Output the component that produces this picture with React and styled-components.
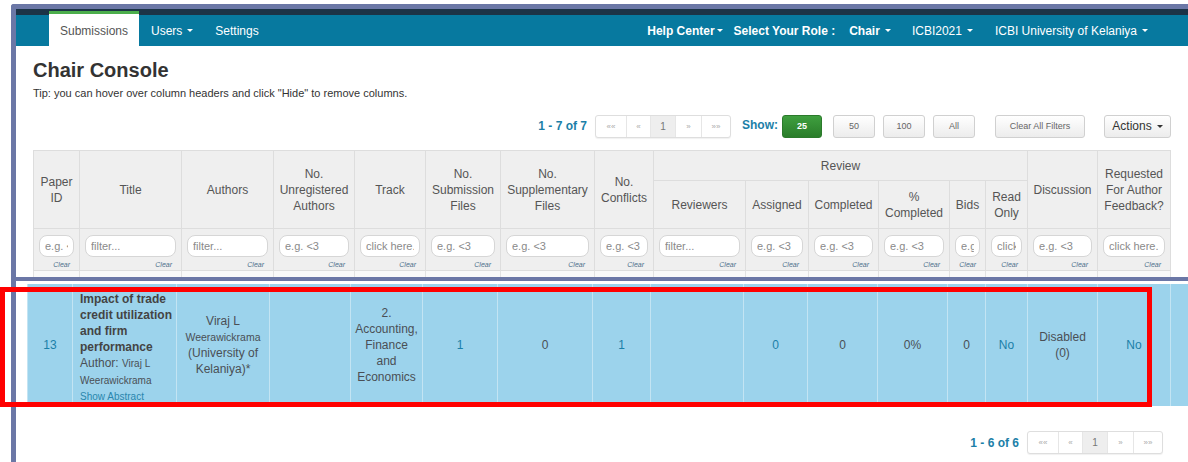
import React from 'react';
import styled, { createGlobalStyle } from 'styled-components';

const SLATE = '#6b77a6';
const TEAL = '#1b7fa8';

const GlobalStyle = createGlobalStyle`
  html, body { margin: 0; padding: 0; background: #fff; }
  body { font-family: "Liberation Sans", Arial, sans-serif; overflow: hidden; }
  #root { width: 1188px; height: 462px; overflow: hidden; }
  * { box-sizing: border-box; }
`;

const Page = styled.div`
  position: relative;
  width: 1188px;
  height: 462px;
  padding-top: 4px;
  overflow: hidden;
  background: #fff;
`;

const Frame = styled.div`
  margin-left: 11px;
  height: 458px;
  border-left: 5px solid ${SLATE};
  border-top: 5px solid ${SLATE};
  border-top-left-radius: 3px;
  overflow: hidden;
  display: flex;
  flex-direction: column;
`;

/* ---------- top navigation ---------- */
const TopBar = styled.nav`
  display: flex;
  flex: none;
  height: 37px;
  border-top: 6px solid #1c3346;
  background: #07799f;
  padding: 0 40px 0 33px;
  font-size: 12px;
`;

const ActiveTab = styled.a`
  margin-top: -4px;
  width: 90px;
  display: flex;
  align-items: center;
  justify-content: center;
  background: #fff;
  border-top: 3px solid #4cae4c;
  color: #555;
  padding-top: 1px;
`;

const NavLink = styled.a`
  display: flex;
  align-items: center;
  color: #fff;
  margin-left: ${p => p.$ml || 0}px;
  font-weight: ${p => (p.$bold ? 700 : 400)};
  white-space: nowrap;
`;

const RightNav = styled.div`
  display: flex;
  margin-left: auto;
`;

const Caret = styled.span`
  display: inline-block;
  width: 0;
  height: 0;
  margin-left: ${p => (p.$tight ? 2 : 5)}px;
  border-top: 3px solid currentColor;
  border-left: 3px solid transparent;
  border-right: 3px solid transparent;
`;

/* ---------- console heading ---------- */
const Content = styled.section`
  flex: none;
  padding: 0 17px;
  overflow: hidden;
`;

const Heading = styled.h1`
  margin: 12px 0 0;
  font-size: 20px;
  line-height: 24px;
  font-weight: 700;
  color: #333;
`;

const Tip = styled.p`
  margin: 4px 0 0;
  font-size: 11px;
  line-height: 14px;
  color: #333;
`;

/* ---------- toolbar ---------- */
const Toolbar = styled.div`
  display: flex;
  justify-content: flex-end;
  align-items: center;
  height: 24px;
  margin-top: 14px;
`;

const Count = styled.span`
  font-size: 12px;
  font-weight: 700;
  color: ${TEAL};
  margin-left: ${p => p.$ml || 0}px;
  white-space: nowrap;
`;

const PagerBox = styled.div`
  display: flex;
  height: 23px;
  margin-left: ${p => p.$ml || 0}px;
  border: 1px solid #dedede;
  border-radius: 3px;
  background: #fff;
  box-shadow: 0 1px 1px rgba(0, 0, 0, 0.06);
  overflow: hidden;
`;

const PagerCell = styled.span`
  width: ${p => p.$w}px;
  display: flex;
  align-items: center;
  justify-content: center;
  font-size: ${p => (p.$active ? 10 : 8)}px;
  color: ${p => (p.$active ? '#777' : '#aaa')};
  background: ${p => (p.$active ? '#eee' : 'transparent')};
  border-left: 1px solid #e6e6e6;
  &:first-child { border-left: 0; }
`;

const ShowLabel = styled.span`
  font-size: 12px;
  font-weight: 700;
  color: ${TEAL};
  margin-left: 11px;
  margin-bottom: 3px;
`;

const SmallButton = styled.button`
  width: ${p => p.$w}px;
  height: 23px;
  margin-left: ${p => p.$ml || 0}px;
  padding: 0;
  font-family: inherit;
  font-size: ${p => p.$fs || 9}px;
  font-weight: ${p => (p.$active ? 700 : 400)};
  color: ${p => (p.$active ? '#fff' : '#666')};
  border: 1px solid ${p => (p.$active ? '#2b7a2b' : '#d0d0d0')};
  border-radius: 3px;
  background: ${p =>
    p.$active
      ? 'linear-gradient(#3f9f3f, #2a7d2a)'
      : 'linear-gradient(#ffffff, #ececec)'};
  display: flex;
  align-items: center;
  justify-content: center;
  gap: 5px;
`;

const ActionsLabel = styled.span`
  display: flex;
  align-items: center;
  gap: 5px;
  color: #333;
`;

/* ---------- table ---------- */
const TableClip = styled.div`
  margin-top: 12px;
  height: 127px;
  overflow: hidden;
`;

const Grid = styled.table`
  table-layout: fixed;
  border-collapse: collapse;
  width: ${p => p.$w}px;
  font-size: 12px;
`;

const HeadCell = styled.th`
  background: #efefef;
  border: 1px solid #dddddd;
  color: #555;
  font-weight: 400;
  line-height: 16px;
  text-align: center;
  vertical-align: middle;
  padding: 0 2px;
  white-space: nowrap;
  overflow: hidden;
`;

const FilterCell = styled.td`
  background: #efefef;
  border: 1px solid #dddddd;
  padding: 6px 5px 0;
  vertical-align: top;
`;

const FilterInput = styled.input`
  display: block;
  width: 100%;
  height: 22px;
  border: 1px solid #d6d6d6;
  border-radius: 8px;
  background: #fff;
  padding: 0 5px;
  font-family: inherit;
  font-size: 11px;
  color: #555;
  outline: none;
  &::placeholder { color: #8a8a8a; }
`;

const ClearLink = styled.div`
  text-align: right;
  font-size: 7px;
  line-height: 9px;
  margin-top: 3px;
  padding-right: 4px;
  font-style: italic;
  color: #4e6f8c;
`;

const BlankCell = styled.td`
  height: 20px;
  background: #f9f9f9;
  border: 1px solid #e2e2e2;
`;

const Divider = styled.div`
  flex: none;
  height: 4px;
  background: ${SLATE};
`;

/* ---------- highlighted submission row ---------- */
const LowerSection = styled.section`
  flex: 1;
  padding: 3px 0 0 11px;
  overflow: hidden;
`;

const RowCell = styled.td`
  height: 122px;
  background: #9cd3ec;
  border-left: 1px solid #c3e4f3;
  border-right: 1px solid #c3e4f3;
  vertical-align: middle;
  text-align: ${p => p.$align || 'center'};
  padding: ${p => (p.$align === 'left' ? '5px 4px 0 7px' : '0 3px')};
  font-size: 12px;
  line-height: 16px;
  color: ${p => (p.$link ? TEAL : '#4a4f55')};
  overflow: hidden;
`;

const TitleText = styled.div`
  font-weight: 700;
  color: #444;
`;

const AuthorLine = styled.div`
  line-height: 16px;
`;

const SmallText = styled.span`
  font-size: ${p => p.$size || 10}px;
`;

const AbstractLink = styled.div`
  font-size: 10px;
  color: #2a86ad;
`;

const BottomBar = styled.div`
  display: flex;
  justify-content: flex-end;
  align-items: center;
  margin-top: 26px;
  padding-right: 25px;
  height: 21px;
`;

const Annotation = styled.div`
  position: absolute;
  left: 0;
  top: 287px;
  width: 1152px;
  height: 120px;
  border: 5px solid #ff0000;
  pointer-events: none;
`;

const columns = [
  { label: ['Paper', 'ID'], w: 46, filter: 'e.g. <3' },
  { label: ['Title'], w: 102, filter: 'filter...' },
  { label: ['Authors'], w: 92, filter: 'filter...' },
  { label: ['No.', 'Unregistered', 'Authors'], w: 81, filter: 'e.g. <3' },
  { label: ['Track'], w: 71, filter: 'click here.' },
  { label: ['No.', 'Submission', 'Files'], w: 75, filter: 'e.g. <3' },
  { label: ['No.', 'Supplementary', 'Files'], w: 94, filter: 'e.g. <3' },
  { label: ['No.', 'Conflicts'], w: 59, filter: 'e.g. <3' },
  { label: ['Reviewers'], w: 92, filter: 'filter...', group: true },
  { label: ['Assigned'], w: 63, filter: 'e.g. <3', group: true },
  { label: ['Completed'], w: 70, filter: 'e.g. <3', group: true },
  { label: ['%', 'Completed'], w: 71, filter: 'e.g. <3', group: true },
  { label: ['Bids'], w: 36, filter: 'e.g. <3', group: true },
  { label: ['Read', 'Only'], w: 42, filter: 'click here.', group: true },
  { label: ['Discussion'], w: 70, filter: 'e.g. <3' },
  { label: ['Requested', 'For Author', 'Feedback?'], w: 73, filter: 'click here.' },
  { label: ['Author', 'Feedback', 'Submitted?'], w: 78, filter: 'click here.' },
];

const rowWidths = [45, 104, 93, 81, 72, 75, 95, 58, 93, 64, 70, 70, 38, 42, 70, 73, 78];

const sum = arr => arr.reduce((a, b) => a + b, 0);

const Lines = ({ lines }) =>
  lines.map((l, i) => (
    <React.Fragment key={i}>
      {i > 0 && <br />}
      {l}
    </React.Fragment>
  ));

const Pager = ({ ml }) => (
  <PagerBox $ml={ml}>
    <PagerCell $w={30}>««</PagerCell>
    <PagerCell $w={24}>«</PagerCell>
    <PagerCell $w={25} $active>1</PagerCell>
    <PagerCell $w={26}>»</PagerCell>
    <PagerCell $w={29}>»»</PagerCell>
  </PagerBox>
);

const firstGroup = columns.findIndex(c => c.group);
const groupSpan = columns.filter(c => c.group).length;

export default function App() {
  return (
    <Page>
      <GlobalStyle />
      <Frame>
        <TopBar>
          <ActiveTab>Submissions</ActiveTab>
          <NavLink $ml={12}>Users<Caret /></NavLink>
          <NavLink $ml={22}>Settings</NavLink>
          <RightNav>
            <NavLink $bold>Help Center<Caret $tight /></NavLink>
            <NavLink $bold $ml={11}>Select Your Role :</NavLink>
            <NavLink $bold $ml={14}>Chair<Caret /></NavLink>
            <NavLink $ml={21}>ICBI2021<Caret /></NavLink>
            <NavLink $ml={22}>ICBI University of Kelaniya<Caret /></NavLink>
          </RightNav>
        </TopBar>

        <Content>
          <Heading>Chair Console</Heading>
          <Tip>Tip: you can hover over column headers and click "Hide" to remove columns.</Tip>

          <Toolbar>
            <Count>1 - 7 of 7</Count>
            <Pager ml={8} />
            <ShowLabel>Show:</ShowLabel>
            <SmallButton $w={40} $ml={4} $active>25</SmallButton>
            <SmallButton $w={42} $ml={11}>50</SmallButton>
            <SmallButton $w={42} $ml={8}>100</SmallButton>
            <SmallButton $w={42} $ml={8}>All</SmallButton>
            <SmallButton $w={90} $ml={20}>Clear All Filters</SmallButton>
            <SmallButton $w={67} $ml={19} $fs={12}>
              <ActionsLabel>
                Actions
                <Caret style={{ marginLeft: 0 }} />
              </ActionsLabel>
            </SmallButton>
          </Toolbar>

          <TableClip>
            <Grid $w={sum(columns.map(c => c.w))}>
              <colgroup>
                {columns.map((c, i) => (
                  <col key={i} style={{ width: c.w }} />
                ))}
              </colgroup>
              <thead>
                <tr style={{ height: 30 }}>
                  {columns.map((c, i) => {
                    if (c.group) {
                      return i === firstGroup ? (
                        <HeadCell key={i} colSpan={groupSpan}>Review</HeadCell>
                      ) : null;
                    }
                    return (
                      <HeadCell key={i} rowSpan={2}>
                        <Lines lines={c.label} />
                      </HeadCell>
                    );
                  })}
                </tr>
                <tr style={{ height: 48 }}>
                  {columns
                    .filter(c => c.group)
                    .map((c, i) => (
                      <HeadCell key={i}>
                        <Lines lines={c.label} />
                      </HeadCell>
                    ))}
                </tr>
                <tr style={{ height: 42 }}>
                  {columns.map((c, i) => (
                    <FilterCell key={i}>
                      <FilterInput placeholder={c.filter} readOnly />
                      <ClearLink>Clear</ClearLink>
                    </FilterCell>
                  ))}
                </tr>
              </thead>
              <tbody>
                <tr>
                  {columns.map((c, i) => (
                    <BlankCell key={i} />
                  ))}
                </tr>
              </tbody>
            </Grid>
          </TableClip>
        </Content>

        <Divider />

        <LowerSection>
          <Grid $w={sum(rowWidths)}>
            <colgroup>
              {rowWidths.map((w, i) => (
                <col key={i} style={{ width: w }} />
              ))}
            </colgroup>
            <tbody>
              <tr>
                <RowCell $link>13</RowCell>
                <RowCell $align="left">
                  <TitleText>
                    Impact of trade credit utilization and firm performance
                  </TitleText>
                  <AuthorLine>
                    Author: <SmallText>Viraj L</SmallText>
                  </AuthorLine>
                  <AuthorLine>
                    <SmallText>Weerawickrama</SmallText>
                  </AuthorLine>
                  <AbstractLink>Show Abstract</AbstractLink>
                </RowCell>
                <RowCell>
                  Viraj L<br />
                  <SmallText $size={10.5}>Weerawickrama</SmallText>
                  <br />
                  (University of<br />
                  Kelaniya)*
                </RowCell>
                <RowCell />
                <RowCell>
                  <Lines lines={['2.', 'Accounting,', 'Finance', 'and', 'Economics']} />
                </RowCell>
                <RowCell $link>1</RowCell>
                <RowCell>0</RowCell>
                <RowCell $link>1</RowCell>
                <RowCell />
                <RowCell $link>0</RowCell>
                <RowCell>0</RowCell>
                <RowCell>0%</RowCell>
                <RowCell>0</RowCell>
                <RowCell $link>No</RowCell>
                <RowCell>
                  Disabled<br />(0)
                </RowCell>
                <RowCell $link>No</RowCell>
                <RowCell />
              </tr>
            </tbody>
          </Grid>

          <BottomBar>
            <Count>1 - 6 of 6</Count>
            <Pager ml={8} />
          </BottomBar>
        </LowerSection>
      </Frame>
      <Annotation />
    </Page>
  );
}
